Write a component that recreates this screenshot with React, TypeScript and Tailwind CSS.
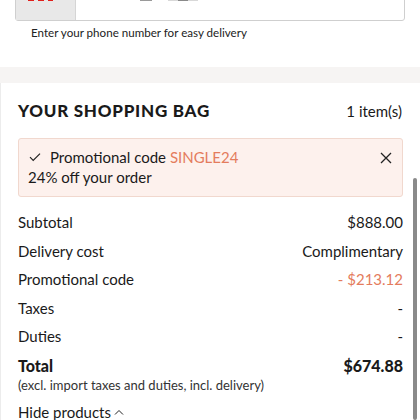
import React from "react";

export default function App() {
  const rows: [string, string, boolean?][] = [
    ["Subtotal", "$888.00"],
    ["Delivery cost", "Complimentary"],
    ["Promotional code", "- $213.12", true],
    ["Taxes", "-"],
    ["Duties", "-"],
  ];
  return (
    <div
      className="w-[420px] h-[420px] overflow-hidden bg-white relative text-[#1a1a1a]"
      style={{ fontFamily: "Lato, 'Noto Sans', sans-serif" }}
    >
      <div className="px-[15px] bg-white">
        <div className="mt-[-24px] h-[45px] flex border border-[#cfcfcf] rounded-[3px]">
          <div className="w-[60px] bg-[#e8e8e8] border-r border-[#d5d5d5] relative">
            <div className="absolute left-[12px] top-[20px] w-[6px] h-[4px] bg-[#e0201c]" />
            <div className="absolute left-[22px] top-[20px] w-[6px] h-[4px] bg-[#e0201c]" />
            <div className="absolute left-[32px] top-[20px] w-[5px] h-[4px] bg-[#e0201c]" />
          </div>
          <div className="flex-1 relative">
            <div className="absolute left-[64px] top-[20px] w-[12px] h-[4px] bg-[#9a9a9a]" />
            <div className="absolute left-[92px] top-[20px] w-[10px] h-[4px] bg-[#d8d8d8]" />
            <div className="absolute left-[102px] top-[20px] w-[10px] h-[4px] bg-[#8a8a8a]" />
            <div className="absolute left-[112px] top-[20px] w-[10px] h-[4px] bg-[#d8d8d8]" />
          </div>
        </div>
        <div className="pl-[16px] pt-[4px] text-[11.6px] leading-[16px] text-[#222] h-[46px]">
          Enter your phone number for easy delivery
        </div>
      </div>
      <div className="h-[16px] bg-[#f6f4f3]" />
      <div className="bg-white border-l border-[#ececec] px-[17px] pt-[16px]">
        <div className="flex items-center justify-between h-[24px]">
          <div className="text-[17px] font-black tracking-[0.75px] text-[#1a1a1a]">YOUR SHOPPING BAG</div>
          <div className="text-[15px] pr-[1px]">1 item(s)</div>
        </div>
        <div className="mt-[15px] h-[59px] rounded-[3px] border border-[#f1d8ce] bg-[#fdf1ed] pl-[9px] pr-[8px] pt-[8px] relative">
          <div className="flex items-center text-[15px] leading-[20px]">
            <svg width="12" height="10" viewBox="0 0 12 10" className="mr-[9px] ml-[1px]">
              <path d="M1 5.2 L4.2 8.4 L11 1.6" fill="none" stroke="#222" strokeWidth="1.2" />
            </svg>
            <span>Promotional code&nbsp;</span>
            <span className="text-[#e47c5d]">SINGLE24</span>
          </div>
          <div className="text-[15px] leading-[20px]">24% off your order</div>
          <svg width="12" height="12" viewBox="0 0 12 12" className="absolute right-[10px] top-[13px]">
            <path d="M1 1 L11 11 M11 1 L1 11" fill="none" stroke="#222" strokeWidth="1.3" />
          </svg>
        </div>
        <div className="mt-[11px] flex flex-col">
          {rows.map(([l, r, promo]) => (
            <div key={l} className="flex justify-between items-center h-[28.5px] text-[15px]">
              <span>{l}</span>
              <span className={promo ? "text-[#e47c5d]" : ""}>{r}</span>
            </div>
          ))}
          <div className="mt-[3px] flex justify-between items-center h-[24px] leading-[20px] text-[16px] font-black">
            <span>Total</span>
            <span>$674.88</span>
          </div>
          <div className="text-[13px] leading-[14px] text-[#333]">
            (excl. import taxes and duties, incl. delivery)
          </div>
          <div className="mt-[10px] flex items-center text-[15px] leading-[20px]">
            <span>Hide products</span>
            <svg width="10" height="6" viewBox="0 0 10 6" className="ml-[3px]">
              <path d="M1 5.5 L5 1.5 L9 5.5" fill="none" stroke="#222" strokeWidth="1" />
            </svg>
          </div>
        </div>
      </div>
      <div className="absolute right-[3px] top-[178px] w-[4px] h-[242px] bg-[#8a8a8a] rounded-[2px]" />
    </div>
  );
}
